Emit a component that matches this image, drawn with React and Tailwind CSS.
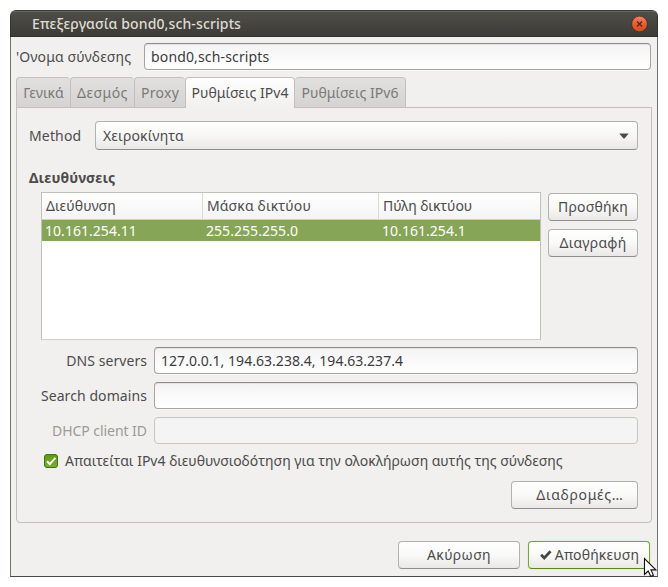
import React from "react";

const tabs = [
  { label: "Γενικά", box: "w-[54px]", tracking: "tracking-[-0.05px]" },
  { label: "Δεσμός", box: "w-[64px]", tracking: "tracking-[0.5px]" },
  { label: "Proxy", box: "w-[51px]", tracking: "tracking-[0.3px]" },
  { label: "Ρυθμίσεις IPv4", box: "w-[110px]", tracking: "tracking-[0.05px]", active: true },
  { label: "Ρυθμίσεις IPv6", box: "w-[111px]", tracking: "tracking-[0.05px]" },
];

function Tab({ label, box, tracking, active }) {
  const look = active
    ? "border-x border-t bg-linear-to-b from-white to-[#f1f0ee] text-[#4c4c4c] pb-px"
    : "border-y border-l bg-linear-to-b from-[#e2e1e0] to-[#d5d3d1] text-[#7a7977] last:border-r last:border-l-0";
  return (
    <div className={`flex h-[31px] items-center justify-center rounded-t-[4px] border-[#c2bfbc] pt-px ${box} ${look}`}>
      <span className={tracking}>{label}</span>
    </div>
  );
}

function Entry({ className = "", children }) {
  return (
    <div className={`flex h-[27px] items-center rounded-[4px] border border-[#a5a4a3] border-t-[#8d8c8b] bg-linear-to-b from-[#f3f3f3] via-[#fafafa] to-white px-1.5 text-[#3c3c3c] shadow-[inset_0_1px_1px_rgba(0,0,0,0.07),0_1px_0_#f8f8f7] ${className}`}>
      {children}
    </div>
  );
}

function Button({ className = "", border = "border-[#b2b1b0] border-b-[#8f8e8d]", children }) {
  return (
    <div className={`flex h-[28px] items-center justify-center rounded-[4px] border bg-linear-to-b from-white via-[#f9f9f8] to-[#eae8e7] ${border} ${className}`}>
      {children}
    </div>
  );
}

function Cell({ className = "", children }) {
  return <div className={`flex items-center ${className}`}>{children}</div>;
}

export default function App() {
  return (
    <div className="relative h-[587px] w-[668px] overflow-hidden bg-white pt-[10px] pl-[10px] font-['Noto_Sans','Liberation_Sans',sans-serif] text-[14px] leading-[20px] whitespace-nowrap text-[#4c4c4c]">
      <div className="flex h-[567px] w-[648px] flex-col overflow-hidden rounded-t-[6px] bg-[#f1f0ee]">
        <header className="flex h-[27px] shrink-0 items-center justify-between border border-[#33322e] border-t-[#3a3935] bg-linear-to-b from-[#4f4e48] to-[#3c3b37] pr-[9px] pl-[21px] shadow-[inset_0_1px_0_#66655e]">
          <span className="pt-px font-medium tracking-[0.12px] text-[#dfdbd2]">Επεξεργασία bond0,sch-scripts</span>
          <svg className="mt-[2px] h-[17px] w-[17px]" viewBox="0 0 17 17">
            <defs>
              <linearGradient id="close" x1="0" y1="0" x2="0" y2="1">
                <stop offset="0" stopColor="#f5835c" />
                <stop offset="0.55" stopColor="#e9592c" />
                <stop offset="1" stopColor="#dd4814" />
              </linearGradient>
            </defs>
            <circle cx="8.5" cy="8" r="7.9" fill="url(#close)" stroke="#35342f" strokeWidth="0.8" />
            <path d="M6 5.5l5 5M11 5.5l-5 5" stroke="#4a2b1e" strokeWidth="1.3" />
          </svg>
        </header>

        <div className="flex min-h-0 flex-1 flex-col border-x border-b border-x-[#75746f] border-b-[#4b4a48] pl-[5px]">
          <div className="mt-[6px] flex items-center">
            <span className="w-[128px] tracking-[0.14px]">'Ονομα σύνδεσης</span>
            <Entry className="w-[507px]">
              <span className="tracking-[0.15px]">bond0,sch-scripts</span>
            </Entry>
          </div>

          <div className="relative z-10 mt-[7px] flex">
            {tabs.map((t) => (
              <Tab key={t.label} {...t} />
            ))}
          </div>

          <section className="-mt-px flex h-[416px] w-[636px] flex-col rounded-b-[4px] border border-[#c2bfbc] pt-[13px] pl-[12px]">
            <div className="flex h-[29px] items-center">
              <span className="w-[66px] tracking-[0.15px]">Method</span>
              <div className="flex h-[29px] w-[543px] items-center justify-between rounded-[4px] border border-[#b2b1b0] border-b-[#8f8e8d] bg-linear-to-b from-white via-[#f7f7f6] to-[#eae8e7] pr-[8px] pl-[7px]">
                <span className="tracking-[0.16px]">Χειροκίνητα</span>
                <svg className="h-[6px] w-[10px]" viewBox="0 0 10 6">
                  <path d="M0.3 0.5h9.4L6 4.9q-1 1-2 0z" fill="#4c4c4c" />
                </svg>
              </div>
            </div>

            <h2 className="mt-[18px] font-bold tracking-[0.2px]">Διευθύνσεις</h2>

            <div className="mt-[4px] ml-[12px] flex gap-[7px]">
              <div className="flex h-[148px] w-[500px] flex-col border border-[#c3bfbb] border-b-[#cfcdca] bg-white">
                <div className="flex h-[27px] border-b border-[#d2d0ce] bg-linear-to-b from-white to-[#f5f4f4]">
                  <Cell className="w-[161px] border-r border-[#dcdad9] pl-[4px] tracking-[0.12px]">Διεύθυνση</Cell>
                  <Cell className="w-[176px] border-r border-[#dcdad9] pl-[4px] tracking-[0.14px]">Μάσκα δικτύου</Cell>
                  <Cell className="flex-1 pl-[4px] tracking-[-0.08px]">Πύλη δικτύου</Cell>
                </div>
                <div className="flex h-[21px] bg-[#87a556] text-white">
                  <Cell className="w-[161px] pl-[3px] tracking-[0.04px]">10.161.254.11</Cell>
                  <Cell className="w-[176px] pl-[3px] tracking-[0.05px]">255.255.255.0</Cell>
                  <Cell className="flex-1 pl-[3px] tracking-[0.04px]">10.161.254.1</Cell>
                </div>
              </div>
              <div className="mt-px flex w-[90px] flex-col gap-[8px]">
                <Button><span className="tracking-[0.18px]">Προσθήκη</span></Button>
                <Button><span className="tracking-[0.25px]">Διαγραφή</span></Button>
              </div>
            </div>

            <div className="mt-[7px] flex w-[609px] flex-col gap-[8px]">
              <div className="flex items-center justify-end gap-[7px]">
                <span className="tracking-[0.06px]">DNS servers</span>
                <Entry className="w-[484px]">
                  <span className="tracking-[0.035px]">127.0.0.1, 194.63.238.4, 194.63.237.4</span>
                </Entry>
              </div>
              <div className="flex items-center justify-end gap-[7px]">
                <span className="tracking-[0.08px]">Search domains</span>
                <Entry className="w-[484px]" />
              </div>
              <div className="flex items-center justify-end gap-[7px]">
                <span className="tracking-[-0.05px] text-[#9b9a98]">DHCP client ID</span>
                <div className="h-[27px] w-[484px] rounded-[4px] border border-[#c6c5c3] bg-[#f4f4f4]" />
              </div>
            </div>

            <div className="mt-[7px] ml-[14px] flex h-[20px] items-center gap-[6px]">
              <svg className="h-[16px] w-[16px]" viewBox="0 0 16 16">
                <defs>
                  <linearGradient id="check" x1="0" y1="0" x2="0" y2="1">
                    <stop offset="0" stopColor="#5f9a0c" />
                    <stop offset="1" stopColor="#7cb02c" />
                  </linearGradient>
                </defs>
                <rect x="1.5" y="1.5" width="13" height="13" rx="2.5" fill="url(#check)" stroke="#41731b" />
                <path d="M4 8.2L6.8 11.1L12.4 4.9" fill="none" stroke="#fff" strokeWidth="2" />
              </svg>
              <span>Απαιτείται IPv4 διευθυνσιοδότηση για την ολοκλήρωση αυτής της σύνδεσης</span>
            </div>

            <Button className="mt-[10px] ml-[482px] w-[127px] pl-[11px]">
              <span className="tracking-[0.75px]">Διαδρομές…</span>
            </Button>
          </section>

          <div className="mt-[18px] flex gap-[8px] pl-[382px]">
            <Button className="w-[122px]">
              <span className="tracking-[0.35px]">Ακύρωση</span>
            </Button>
            <Button className="w-[122px] gap-[3px] pl-px shadow-[0_0_1px_#9cc75e]" border="border-[#74aa28] border-b-[#568a10]">
              <svg className="h-[12px] w-[12px]" viewBox="0 0 13 12">
                <path d="M1.2 5.8L4.6 9.2L11.4 1.9" fill="none" stroke="#454545" strokeWidth="2.9" />
              </svg>
              <span className="tracking-[0.16px]">Αποθήκευση</span>
            </Button>
          </div>
        </div>
      </div>

      <svg className="absolute top-[557px] left-[643px] h-[20px] w-[14px]" viewBox="0 0 14 20">
        <path d="M1.5 1.5v16l3.7-3.5l2.6 5.5l2.6-1.2L8 12.9h4.8z" fill="#fff" stroke="#111" strokeWidth="1.1" />
      </svg>
    </div>
  );
}
